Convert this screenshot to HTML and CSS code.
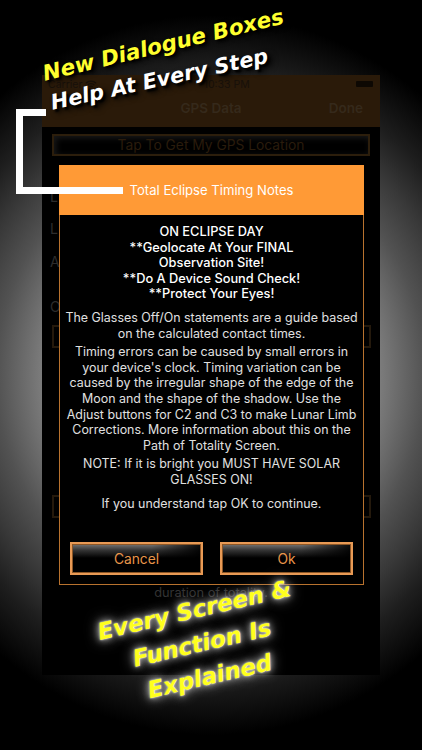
FILE: index.html
```html
<!DOCTYPE html>
<html lang="en">
<head>
<meta charset="utf-8">
<title>Total Eclipse Timing Notes</title>
<link rel="stylesheet" href="styles.css">
</head>
<body>
<main class="stage">
  <section class="screen">
    <header class="topbar">
      <div class="status">
        <span class="carrier">Carrier
          <svg class="wifi" viewBox="0 0 14 10" width="12" height="9"><path d="M1 3.5a8.5 8.5 0 0 1 12 0M3 5.6a5.6 5.6 0 0 1 8 0M5 7.6a2.8 2.8 0 0 1 4 0" fill="none" stroke="#17100a" stroke-width="1.4"/></svg>
        </span>
        <span class="time">10:33 PM</span>
        <span class="battery"></span>
      </div>
      <nav class="nav">
        <span class="nav-side"></span>
        <span class="nav-title">GPS Data</span>
        <span class="nav-side nav-done">Done</span>
      </nav>
    </header>
    <div class="content">
      <div class="ghost-btn">Tap To Get My GPS Location</div>
      <div class="ghost-label ghost-first">L</div>
      <div class="ghost-label ghost-second">L</div>
      <div class="ghost-label ghost-third">A</div>
      <div class="ghost-label ghost-fourth">O</div>
      <div class="ghost-box ghost-box-a"></div>
      <div class="ghost-box ghost-box-b"></div>
      <div class="ghost-foot">duration of totality.</div>
    </div>
    <div class="dialog">
      <h1 class="dialog-head">Total Eclipse Timing Notes</h1>
      <div class="dialog-body">
        <p class="lead">ON ECLIPSE DAY<br>**Geolocate At Your FINAL<br>Observation Site!<br>**Do A Device Sound Check!<br>**Protect Your Eyes!</p>
        <p class="gap-wide">The Glasses Off/On statements are a guide based<br>on the calculated contact times.</p>
        <p class="gap-small">Timing errors can be caused by small errors in<br>your device's clock. Timing variation can be<br>caused by the irregular shape of the edge of the<br>Moon and the shape of the shadow. Use the<br>Adjust buttons for C2 and C3 to make Lunar Limb<br>Corrections. More information about this on the<br>Path of Totality Screen.</p>
        <p class="gap-small">NOTE: If it is bright you MUST HAVE SOLAR<br>GLASSES ON!</p>
        <p class="gap-wide">If you understand tap OK to continue.</p>
      </div>
      <div class="dialog-actions">
        <button class="action">Cancel</button>
        <button class="action">Ok</button>
      </div>
    </div>
  </section>
  <svg class="bracket" viewBox="0 0 110 86" width="110" height="86"><path d="M30 3.5H3.5V81.5H107" fill="none" stroke="#fff" stroke-width="7"/></svg>
  <div class="promo promo-top">
    <div class="promo-yellow">New Dialogue Boxes</div>
    <div class="promo-white">Help At Every Step</div>
  </div>
  <div class="promo promo-bottom">Every Screen &amp;<br>Function Is<br>Explained</div>
</main>
</body>
</html>
```
FILE: styles.css
```css
* { box-sizing: border-box; }
html, body { margin: 0; padding: 0; background: #000; }
body { font-family: Inter, "Liberation Sans", sans-serif; }

.stage {
  position: relative;
  width: 422px;
  height: 750px;
  overflow: hidden;
  padding: 75px 42px 75px;
  background: radial-gradient(ellipse 335px 360px at 211px 375px, #999 0%, #7a7a7a 51%, #525252 64%, #383838 75%, #1e1e1e 85%, #000 100%);
}

.screen {
  position: relative;
  display: flex;
  flex-direction: column;
  height: 600px;
  width: 338px;
  background: #000;
}

.topbar { height: 52px; background: #2a1a09; color: #17100a; }
.status {
  display: flex;
  justify-content: space-between;
  align-items: center;
  height: 18px;
  padding: 0 7px 0 6px;
  font-size: 10.5px;
}
.carrier { display: flex; align-items: center; gap: 3px; }
.battery { width: 17px; height: 6px; background: #0d0803; border-radius: 1px; }
.nav {
  display: flex;
  justify-content: space-between;
  align-items: center;
  height: 34px;
  padding: 0 17px 4px;
  color: #35291b;
  font-size: 13.5px;
  font-weight: 600;
}
.nav-side { width: 60px; }
.nav-done { text-align: right; }

.content { position: relative; flex: 1; }
.ghost-btn {
  margin: 7px 10px 0;
  height: 22px;
  border: 2px solid #2c1e0c;
  color: #2a1c0c;
  font-size: 13.8px;
  line-height: 18px;
  text-align: center;
  box-shadow: inset 2px 2px 6px #1a1a1a;
}
.ghost-label { position: absolute; left: 8px; color: #2c2c2c; font-size: 14px; line-height: 16px; }
.ghost-first { top: 62px; }
.ghost-second { top: 94px; }
.ghost-third { top: 127px; }
.ghost-fourth { top: 172px; }
.ghost-box { position: absolute; left: 10px; right: 9px; height: 23px; border: 2px solid #24190c; }
.ghost-box-a { top: 198px; }
.ghost-box-b { top: 368px; }
.ghost-foot {
  position: absolute;
  left: 0;
  right: 0;
  top: 458px;
  text-align: center;
  color: #333;
  font-size: 12.8px;
  line-height: 16px;
}

.dialog {
  position: absolute;
  left: 17px;
  top: 90px;
  width: 305px;
  height: 420px;
  display: flex;
  flex-direction: column;
  background: #000;
  border: 1px solid #b8722e;
}
.dialog-head {
  margin: -1px -1px 0;
  height: 50px;
  background: #ff9a36;
  color: #fff;
  font-size: 13.1px;
  font-weight: 400;
  line-height: 50px;
  text-align: center;
}
.dialog-body {
  flex: 1;
  padding-top: 9px;
  color: #e0e0e0;
  font-size: 12.45px;
  line-height: 15.6px;
  text-align: center;
}
.dialog-body p { margin: 0; white-space: nowrap; }
.lead { color: #fff; font-size: 12.8px; font-weight: 500; }
.gap-wide { margin-top: 8px !important; }
.gap-small { margin-top: 3px !important; }

.dialog-actions {
  display: flex;
  justify-content: space-between;
  padding: 0 10px 9px;
}
.action {
  width: 133px;
  height: 33px;
  padding: 0;
  border: 2px solid #e89a55;
  background: linear-gradient(100deg, rgba(0,0,0,0) 60%, #000 100%), linear-gradient(to bottom, #777 0, #333 22%, #000 48%);
  color: #e8954a;
  font-family: inherit;
  font-size: 13.8px;
  box-shadow: inset 0 0 0 1px #8a5526;
}

.bracket { position: absolute; left: 16px; top: 109px; }

.promo {
  position: absolute;
  font-family: "DejaVu Sans", sans-serif;
  font-weight: 700;
  font-style: oblique;
  white-space: nowrap;
}
.promo-top { left: 0; top: 0; width: 0; height: 0; }
.promo-yellow,
.promo-white { position: absolute; transform-origin: left center; }
.promo-yellow {
  left: 43px;
  top: 61px;
  transform: rotate(-13.5deg);
  color: #ffff2e;
  font-size: 21.5px;
  text-shadow: 2px 2px 2px #000, 3px 3px 5px #000;
}
.promo-white {
  left: 51px;
  top: 91px;
  transform: rotate(-12.3deg);
  color: #fff;
  font-size: 21px;
  text-shadow: 2px 3px 2px #000, 4px 4px 6px #000;
}
.promo-bottom {
  left: 92px;
  top: 592px;
  width: 220px;
  transform: rotate(-13deg);
  color: #ffff1e;
  font-size: 23px;
  line-height: 34px;
  text-align: center;
  text-shadow: 0 0 2px #fff, 0 0 7px #ccc, 0 0 14px #aaa;
}
```
